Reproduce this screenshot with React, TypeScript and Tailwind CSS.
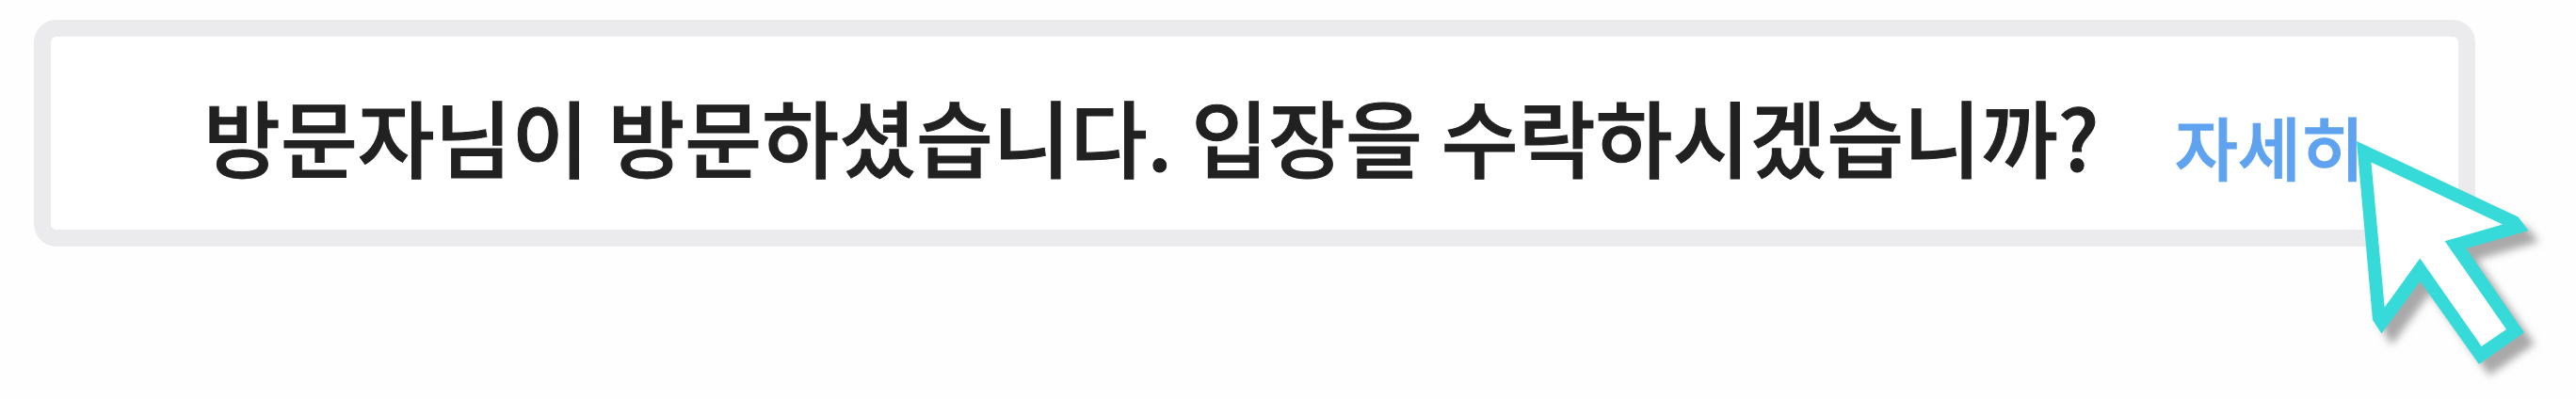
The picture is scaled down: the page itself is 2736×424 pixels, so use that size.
import React from "react";

function CursorIcon() {
  return (
    <svg
      className="absolute left-full top-1/2 -ml-2 -mt-1 h-[256px] w-[212px] max-w-none overflow-visible pointer-events-none"
      viewBox="0 0 212 256"
      aria-hidden="true"
    >
      <defs>
        <filter id="cursorShadow" x="-20%" y="-20%" width="150%" height="150%">
          <feGaussianBlur stdDeviation="4" />
        </filter>
      </defs>
      <path
        d="M0 0L171.500 80.500L182.500 95L116.500 114L178 203.500L130 237L67.500 149L26.500 204.500L17 190Z"
        transform="translate(11 12)"
        fill="#a9a9a9"
        filter="url(#cursorShadow)"
      />
      <path d="M0 0L171.500 80.500L182.500 95L116.500 114L178 203.500L130 237L67.500 149L26.500 204.500L17 190Z" fill="#36dad9" />
      <path d="M15.500 22.500L155 88.500L93.700 106.300L159 200L132.700 218L67.300 124.500L29.700 176.500Z" fill="#ffffff" />
    </svg>
  );
}

function VisitNotice() {
  return (
    <div className="flex items-center h-[241px] rounded-[24px] border-[18px] border-[#ebebed] bg-white pl-[162px] whitespace-nowrap">
      <p className="mt-1 text-[89px] leading-[128px] font-medium text-[#212121] [-webkit-text-stroke:1px]">
        방문자님이 방문하셨습니다. 입장을 수락하시겠습니까?
      </p>
      <button type="button" className="relative mt-6 ml-20 text-[73px] leading-[112px] font-medium text-[#5fa3f0] [-webkit-text-stroke:1px]">
        자세히
        <CursorIcon />
      </button>
    </div>
  );
}

function App() {
  return (
    <div className="bg-[#fefefe] pl-9 pr-[107px] pt-[21px] pb-[162px] overflow-hidden font-['Noto_Sans_CJK_KR',sans-serif]">
      <VisitNotice />
    </div>
  );
}

export default App;
